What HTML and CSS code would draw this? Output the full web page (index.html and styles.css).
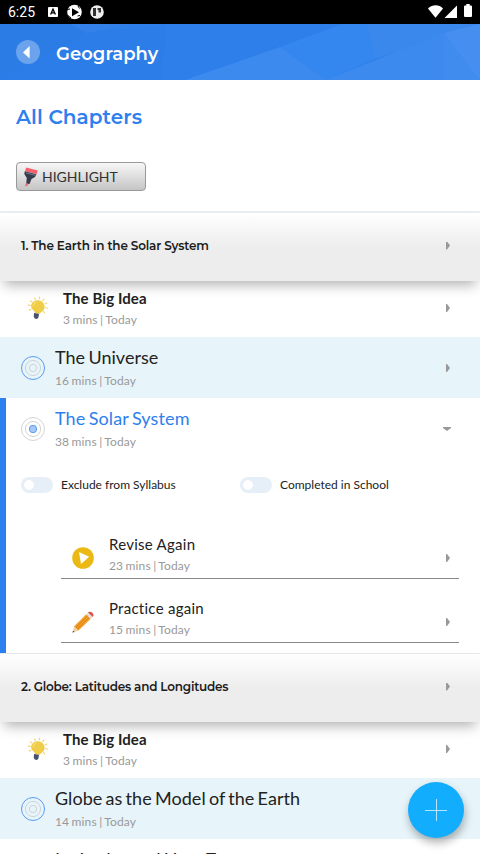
FILE: index.html
```
<!DOCTYPE html>
<html lang="en">
<head>
<meta charset="utf-8">
<title>Geography</title>
<link rel="stylesheet" href="styles.css">
</head>
<body>
<svg class="defs" width="0" height="0" aria-hidden="true">
  <symbol id="bulb" viewBox="0 0 22 24">
    <g stroke="#f3d675" stroke-width="1.2" stroke-linecap="round"><path d="M8.300 3.600L7.700 2M12.200 2.800L12.600 1.200M15.700 4.600L16.900 3.200M18.200 7.800L20 7M18.600 11.500L20.500 12.200M16.500 15.300L17.500 17M4.700 5.800L3.400 4.900M3.300 9.300L1.200 9.100M3.800 13.400L2.300 14.100"/></g>
    <path d="M10.800 4.300c4 0 6.800 3 6.800 6.500 0 4.200-3.600 4.800-4.700 7l-5-.9c.1-2.300-3.800-2.800-3.800-6.800 0-3.200 3-5.800 6.700-5.800z" fill="#efcd49"/>
    <path d="M6 10c.3-2 1.600-3.400 3.500-3.900" fill="none" stroke="#f9e58d" stroke-width="1"/>
    <path d="M7 17l5 .8-.6 3.600-1.300 1.500-2.400-.4-.9-1.900z" fill="#48516b"/>
  </symbol>
  <symbol id="rings" viewBox="0 0 24 24">
    <g fill="none"><circle cx="12" cy="12" r="11.500" stroke="#5b9bf2"/><circle cx="12" cy="12" r="7.600" stroke="#cdd5d9"/><circle cx="12" cy="12" r="3.700" stroke="#cdd5d9"/></g>
  </symbol>
</svg>

<div class="status">
  <span class="time">6:25</span>
  <svg class="status-left" width="58" height="16" viewBox="0 0 58 16">
    <rect x="1" y="3" width="10" height="10" rx="1" fill="#fff"/><path d="M3.600 10.500L6 5.200l2.400 5.300M4.500 8.900h3" fill="none" stroke="#000" stroke-width="1.300"/>
    <circle cx="27.500" cy="8" r="7.300" fill="#fff"/><path d="M25 4.300L32 8.200l-7 4z" fill="#000"/><path d="M20 5.500l3-.5M21 11.500l3 2.500M31 2l1.500 2.500M33 11.500l-2.500 .5" stroke="#000"/>
    <circle cx="50" cy="8" r="6.800" fill="#eee"/><path d="M46 4h3v8h-3zM50.500 4h3.500v4.500h-2.500V6h-1z" fill="#333"/>
  </svg>
  <svg class="status-right" width="46" height="16" viewBox="0 0 46 16">
    <g fill="#fff"><path d="M0 4.500C4.500.3 11 .3 15 4.500L7.500 13.700z"/><path d="M29 1.500V14H16.500z"/><path d="M36 2.500q0-1 1-1h1.300V0h3.400v1.500H43q1 0 1 1V12q0 1-1 1h-6q-1 0-1-1z"/></g>
  </svg>
</div>

<header class="topbar">
  <svg class="facets" viewBox="0 0 480 56" preserveAspectRatio="none">
    <path fill="#2d7fe9" d="M0 0h480v56H0z"/>
    <path fill="#2b7ce5" d="M0 0h70l17 9L0 56z"/>
    <path fill="#3481e8" d="M70 0h60L87 9z"/>
    <path fill="#2c7de7" d="M87 9l80-8-7 55H0z"/>
    <path fill="#2e7fea" d="M167 0h175L185 56h-25z"/>
    <path fill="#3d8aef" d="M240 37l40-14 47 33H185z"/>
    <path fill="#3587f0" d="M280 23L342 0h25l8 35-50 21z"/>
    <path fill="#3b88ed" d="M367 0h113L375 35z"/>
    <path fill="#3d8aee" d="M325 56L444 9v47z"/>
    <path fill="#468ff0" d="M444 9l36-9v56h-3z"/>
    <path fill="#408bee" d="M444 9l36 47h-36z"/>
  </svg>
  <svg class="back" viewBox="0 0 24 24"><circle cx="12" cy="12" r="12" fill="#fff" fill-opacity=".3"/><path d="M7 12.400L13.600 6v12.600z" fill="#fff"/></svg>
  <h1>Geography</h1>
</header>

<section class="intro">
  <h2>All Chapters</h2>
  <button class="highlight">
    <svg width="14" height="20" viewBox="0 0 14 20"><path d="M2.200.500L13.700 3.600 12.800 7 1 4.200z" fill="#f75f6b"/><path d="M.800 4.300L12.500 7.300 11 10l-3.500 2-2 5H2.200l.6-6L.300 7z" fill="#353a4b"/><path d="M2 6l9.500 2.300" stroke="#77798a"/><path d="M2 16.300l2.500.3-.9 2.100-2.700.5z" fill="#f46873"/></svg>
    <span>HIGHLIGHT</span>
  </button>
</section>

<main>
  <div class="chapter first"><h3>1. The Earth in the Solar System</h3><i class="arrow"></i></div>
  <div class="row idea">
    <svg class="bulb"><use href="#bulb"/></svg>
    <div class="copy"><b>The Big Idea</b><small>3 mins | Today</small></div><i class="arrow"></i>
  </div>
  <div class="row topic tint">
    <svg class="rings"><use href="#rings"/></svg>
    <div class="copy"><strong>The Universe</strong><small>16 mins | Today</small></div><i class="arrow"></i>
  </div>
  <div class="expanded">
    <div class="row topic">
      <svg class="rings" viewBox="0 0 24 24"><g fill="none" stroke="#d4d4d4"><circle cx="12" cy="12" r="11.500"/><circle cx="12" cy="12" r="7.600"/></g><circle cx="12" cy="12" r="3.700" fill="#a5c8f7" stroke="#5b9bf2"/></svg>
      <div class="copy"><strong>The Solar System</strong><small>38 mins | Today</small></div><i class="arrow down"></i>
    </div>
    <div class="toggles">
      <label><i class="switch"></i><span>Exclude from Syllabus</span></label>
      <label><i class="switch"></i><span>Completed in School</span></label>
    </div>
    <div class="task">
      <svg class="task-icon" viewBox="0 0 22 22"><circle cx="11" cy="11" r="10.800" fill="#ebb915"/><path d="M7 5l10.200 4.700L9 17z" fill="#fff"/></svg>
      <div class="copy"><span>Revise Again</span><small>23 mins | Today</small></div><i class="arrow"></i>
    </div>
    <div class="task">
      <svg class="task-icon" viewBox="0 0 22 22"><path d="M1.900 15.500L14.200 3.200l4.600 4.600L6.300 19.800z" fill="#f6a52c"/><path d="M3.700 16.500L15.800 4.600M5.300 18L17.300 6.300" stroke="#df8419" stroke-width="1.100"/><path d="M14.200 3.200l2-1.900 4.500 4.500-1.900 2z" fill="#e1dedb"/><path d="M16 1.400c2.600-2.500 7.300 1.700 4.800 4.500z" fill="#df5148"/><path d="M1.900 15.500l4.400 4.300-5.700 1.700z" fill="#efd2a6"/><path d="M1.100 19.700l1.400 1.200-2 .7z" fill="#333"/></svg>
      <div class="copy"><span>Practice again</span><small>15 mins | Today</small></div><i class="arrow"></i>
    </div>
  </div>
  <div class="chapter second"><h3>2. Globe: Latitudes and Longitudes</h3><i class="arrow"></i></div>
  <div class="row idea">
    <svg class="bulb"><use href="#bulb"/></svg>
    <div class="copy"><b>The Big Idea</b><small>3 mins | Today</small></div><i class="arrow"></i>
  </div>
  <div class="row topic tint">
    <svg class="rings"><use href="#rings"/></svg>
    <div class="copy"><strong>Globe as the Model of the Earth</strong><small>14 mins | Today</small></div>
  </div>
  <div class="row next">
    <div class="copy"><strong>Latitudes and Heat Zones</strong></div>
  </div>
</main>
<button class="fab" aria-label="Add"><svg width="22" height="22" viewBox="0 0 22 22"><path d="M11.500 0v22M0 11.500h22" stroke="#b9e6ff" stroke-width="1"/></svg></button>
</body>
</html>
```
FILE: styles.css
```
* { box-sizing: border-box; }
html { height: 854px; overflow: hidden; }
body { margin: 0; height: 854px; overflow: hidden; position: relative; background: #fff; font-family: Lato, sans-serif; color: #222; font-variant-ligatures: none; }
svg { display: block; flex: none; }
.defs { position: absolute; }
h1, h2, h3 { margin: 0; font-family: Montserrat, Inter, sans-serif; font-weight: 600; white-space: nowrap; }
.status { height: 24px; background: #000; color: #fff; display: flex; align-items: center; padding: 0 6px 0 8px; font: 14px/24px Roboto, sans-serif; }
.time { width: 39px; }
.status-right { margin-left: auto; margin-top: -1px; }
.topbar { height: 56px; position: relative; display: flex; align-items: center; padding-left: 16px; }
.facets { position: absolute; inset: 0; width: 100%; height: 100%; }
.back { position: relative; width: 24px; height: 24px; }
.topbar h1 { position: relative; margin: 4px 0 0 16px; color: #fff; font-size: 18px; line-height: 24px; letter-spacing: .05px; }
.intro { height: 133px; padding: 24px 16px 0; border-bottom: 2px solid #e8eef3; }
.intro h2 { font-size: 20px; line-height: 26px; color: #2d80ed; letter-spacing: .08px; }
.highlight { display: flex; align-items: center; gap: 4px; width: 130px; height: 29px; margin-top: 32px; padding: 0 7px; border: 1px solid #999; border-radius: 4px; background: linear-gradient(#f7f7f7, #c5c5c5); font: 14px Lato, sans-serif; color: #333; }
.chapter { position: relative; height: 68px; display: flex; align-items: center; justify-content: space-between; padding: 0 30px 3px 21px; background: linear-gradient(#fff, #ededed 50%); box-shadow: 0 8px 12px -4px rgba(0,0,0,.3); }
.chapter.second { height: 69px; border-top: 1px solid #e8e8e8; }
.chapter h3 { font-size: 12px; letter-spacing: -.17px; color: #1c1c1c; }
.chapter.second h3 { letter-spacing: -.21px; }
.arrow { flex: none; width: 4px; height: 8px; margin-left: auto; background: #999; clip-path: polygon(0 0, 25% 0, 100% 50%, 25% 100%, 0 100%); }
.arrow.down { width: 8px; height: 4px; margin-right: -1px; clip-path: polygon(0 0, 100% 0, 100% 25%, 50% 100%, 0 25%); }
.row { display: flex; align-items: center; padding-right: 30px; }
.idea { height: 56px; padding: 0 30px 2px 27px; }
.topic { height: 61px; padding-left: 21px; }
.topic .arrow { margin-top: 1px; }
.tint { background: #e7f4f9; }
.copy { display: flex; flex-direction: column; white-space: nowrap; }
.bulb { width: 22px; height: 24px; margin-right: 14px; }
.rings { width: 24px; height: 24px; margin-right: 10px; }
.copy b { font-size: 15px; line-height: 20px; letter-spacing: .1px; }
.copy strong { font-size: 18px; font-weight: 400; line-height: 24px; letter-spacing: .04px; word-spacing: -1.400px; }
.copy small { font-size: 12px; line-height: 16px; color: #999; margin-top: 3px; letter-spacing: .13px; word-spacing: -.8px; }
.idea .copy { margin-top: -1px; }
.idea .copy small { margin-top: 4px; }
.topic .copy { margin-top: -1px; }
.topic .copy small { margin-top: 4px; }
.next { height: 15px; overflow: hidden; padding: 8px 0 0 55px; align-items: flex-start; }
.copy span { font-size: 15px; line-height: 20px; letter-spacing: .26px; }
.expanded { height: 255px; border-left: 6px solid #2d80ed; }
.expanded .topic { padding-left: 15px; }
.expanded strong { color: #2d80ed; letter-spacing: .12px; }
.toggles { display: grid; grid-template-columns: 219px 1fr; padding: 18px 0 0 15px; height: 56px; }
.toggles label { display: flex; align-items: center; gap: 8px; height: 16px; font-size: 12px; }
.toggles span { padding-bottom: 2px; }
.switch { width: 32px; height: 16px; border-radius: 8px; background: radial-gradient(circle at 8px 8px, #fff 4.500px, #e6eff8 5.200px); }
.task { height: 64px; margin: 0 21px 0 55px; padding: 19px 9px 0 11px; display: flex; border-bottom: 1px solid #888; }
.task-icon { width: 22px; height: 22px; margin: 13px 15px 0 0; }
.task .copy small { margin-top: 4px; }
.task .arrow { margin-top: 20px; }
.fab { position: absolute; left: 408px; top: 782px; width: 56px; height: 56px; border: 0; border-radius: 50%; background: #12adfd; display: flex; align-items: center; justify-content: center; box-shadow: 1px 5px 8px rgba(0,0,0,.3); }
```
